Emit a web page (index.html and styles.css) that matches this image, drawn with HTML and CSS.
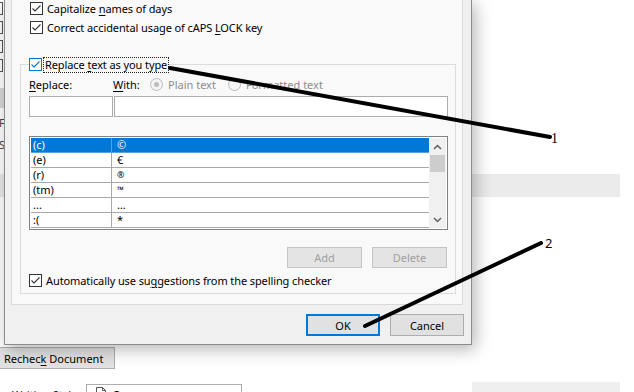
FILE: index.html
```html
<!DOCTYPE html>
<html lang="en">

<head>
    <meta charset="UTF-8">
    <title>AutoCorrect</title>
    <link rel="stylesheet" href="styles.css">
</head>

<body>
    <!-- the document window behind the dialog -->
    <div class="backdrop">
        <div class="back-top">
            <div class="side-strip">
                <span class="stub"></span>
                <span class="stub"></span>
                <span class="stub"></span>
                <span class="stub"></span>
                <span class="stub-band"></span>
                <span class="stub-text">F</span>
                <span class="stub-text">S</span>
            </div>
            <div class="back-main">
                <div class="band"></div>
            </div>
        </div>
        <div class="back-actions">
            <button class="win-btn recheck">Rechec<u>k</u> Document</button>
        </div>
        <div class="back-bottom">
            <span class="cut-label">Writing Style:</span>
            <div class="picker">
                <svg width="10" height="12" viewBox="0 0 10 12">
                    <path d="M0.5 0.5 H6.5 L9.5 3.5 V11.5 H0.5 Z M6.5 0.5 V3.5 H9.5" fill="#fff" stroke="#555" />
                </svg>
                <span>Grammar</span>
            </div>
            <div class="band band-low"></div>
        </div>
    </div>

    <div class="dialog">
        <div class="panel">
            <div class="check-row top-check">
                <span class="box"><svg viewBox="0 0 11 11"><polyline points="1.5,5.5 4,8 9.5,2.5" /></svg></span>
                <span>Capitalize <u>n</u>ames of days</span>
            </div>
            <div class="check-row top-check">
                <span class="box"><svg viewBox="0 0 11 11"><polyline points="1.5,5.5 4,8 9.5,2.5" /></svg></span>
                <span>Correct accidental usage of cAPS <u>L</u>OCK key</span>
            </div>

            <fieldset class="group">
                <legend class="check-row">
                    <span class="box box-focus"><svg viewBox="0 0 11 11"><polyline points="1.5,5.5 4,8 9.5,2.5" /></svg></span>
                    <span class="focus-text">Replace <u>t</u>ext as you type</span>
                </legend>

                <div class="field-labels">
                    <span class="lbl-replace"><u>R</u>eplace:</span>
                    <span class="lbl-with"><u>W</u>ith:</span>
                    <span class="radio on"></span>
                    <span class="disabled lbl-plain">Plain text</span>
                    <span class="radio"></span>
                    <span class="disabled">Formatted text</span>
                </div>

                <div class="inputs">
                    <div class="inp inp-replace"></div>
                    <div class="inp inp-with"></div>
                </div>

                <div class="list">
                    <div class="rows">
                        <div class="row sel"><span class="c1">(c)</span><span class="c2">©</span></div>
                        <div class="row"><span class="c1">(e)</span><span class="c2">€</span></div>
                        <div class="row"><span class="c1">(r)</span><span class="c2 small">®</span></div>
                        <div class="row"><span class="c1">(tm)</span><span class="c2 small">™</span></div>
                        <div class="row"><span class="c1">...</span><span class="c2">…</span></div>
                        <div class="row"><span class="c1">:(</span><span class="c2">*</span></div>
                    </div>
                    <div class="scrollbar">
                        <span class="arrow">
                            <svg width="9" height="6" viewBox="0 0 9 6"><polyline points="1,5 4.5,1.5 8,5" /></svg>
                        </span>
                        <span class="thumb"></span>
                        <span class="track"></span>
                        <span class="arrow">
                            <svg width="9" height="6" viewBox="0 0 9 6"><polyline points="1,1 4.5,4.5 8,1" /></svg>
                        </span>
                    </div>
                </div>

                <div class="list-actions">
                    <button class="win-btn" disabled>Add</button>
                    <button class="win-btn" disabled>Delete</button>
                </div>

                <div class="check-row auto-check">
                    <span class="box"><svg viewBox="0 0 11 11"><polyline points="1.5,5.5 4,8 9.5,2.5" /></svg></span>
                    <span>Automatically use su<u>g</u>gestions from the spelling checker</span>
                </div>
            </fieldset>
        </div>

        <div class="dialog-actions">
            <button class="win-btn default">OK</button>
            <button class="win-btn">Cancel</button>
        </div>
    </div>

    <!-- hand drawn callout lines -->
    <svg class="callouts" width="634" height="392" viewBox="0 0 634 392">
        <line x1="170" y1="68" x2="550" y2="137" />
        <line x1="365" y1="326" x2="541" y2="243" />
        <text class="num-1" x="551" y="143">1</text>
        <text class="num-2" x="545" y="248">2</text>
    </svg>
</body>

</html>
```

FILE: styles.css
```css
* {
    margin: 0;
    padding: 0;
    box-sizing: border-box;
}

body {
    width: 634px;
    height: 392px;
    overflow: hidden;
    position: relative;
    background: #fff;
    color: #000;
    font-family: "Noto Sans", "Open Sans", sans-serif;
    font-size: 11px;
}

u {
    text-decoration-thickness: 1px;
    text-underline-offset: 2px;
}

/* ---------- backdrop window ---------- */

.backdrop {
    display: flex;
    flex-direction: column;
}

.back-top {
    height: 343px;
    display: flex;
}

.side-strip {
    width: 4px;
    overflow: hidden;
    display: flex;
    flex-direction: column;
    flex-shrink: 0;
}

.stub {
    display: block;
    width: 13px;
    height: 13px;
    margin: 2px 0 4px -10px;
    border: 1px solid #555;
}

.stub-band {
    display: block;
    height: 20px;
    margin-top: 12px;
    background: #d9d9d9;
}

.stub-text {
    display: block;
    margin: 8px 0 0 -1px;
    line-height: 14px;
    color: #444;
}

.back-main {
    flex: 1;
}

.band {
    width: 620px;
    height: 23px;
    margin-top: 174px;
    margin-left: -4px;
    background: #ebebeb;
}

.back-actions {
    margin-top: 4px;
    height: 22px;
}

.win-btn {
    font-family: inherit;
    font-size: 11px;
    color: #000;
    height: 21px;
    background: #e1e1e1;
    border: 1px solid #adadad;
}

.win-btn:disabled {
    color: #a0a0a0;
    background: #e4e4e4;
    border-color: #c4c4c4;
}

.recheck {
    width: 117px;
    height: 22px;
    margin-left: -2px;
    text-align: left;
    padding-left: 5px;
}

.back-bottom {
    margin-top: 15px;
    display: flex;
    align-items: flex-start;
    position: relative;
}

.cut-label {
    width: 86px;
    padding-left: 12px;
    line-height: 14px;
    margin-top: 4px;
    color: #222;
}

.picker {
    width: 156px;
    height: 20px;
    border: 1px solid #adadad;
    display: flex;
    align-items: flex-start;
    gap: 6px;
    padding: 2px 0 0 9px;
}

.band-low {
    width: 148px;
    height: 10px;
    margin-left: 230px;
    margin-top: -2px;
    background: #efefef;
}

/* ---------- dialog ---------- */

.dialog {
    position: absolute;
    left: 4px;
    top: 0;
    width: 468px;
    background: #f0f0f0;
    border: 1px solid #8c8c8c;
    border-top: 0;
    box-shadow: 3px 4px 16px rgba(0, 0, 0, 0.3);
    z-index: 2;
}

.panel {
    margin: 0 8px 0 6px;
    padding: 2px 6px 10px 8px;
    background: #f9f9f9;
    border: 1px solid #dadada;
    border-top: 0;
}

.check-row {
    display: flex;
    align-items: center;
    gap: 4px;
    height: 13px;
    white-space: nowrap;
    letter-spacing: -0.1px;
}

.top-check {
    margin-left: 10px;
    margin-bottom: 6px;
}

.box {
    width: 13px;
    height: 13px;
    flex-shrink: 0;
    border: 1px solid #333;
    background: #fff;
    display: flex;
}

.box svg {
    width: 11px;
    height: 11px;
}

.box polyline {
    fill: none;
    stroke: #333;
    stroke-width: 1.1;
}

.box-focus {
    border-color: #0078d7;
}

.box-focus polyline {
    stroke: #0078d7;
}

.group {
    margin-top: 23px;
    border: 1px solid #dcdcdc;
    padding: 0 7px 6px 8px;
    min-width: 0;
}

.group legend {
    height: 15px;
    padding: 0;
    gap: 2px;
}

.focus-text {
    outline: 1px dotted #222;
    padding: 0 1px;
    line-height: 14px;
}

.field-labels {
    display: flex;
    align-items: center;
    height: 16px;
    margin-top: 4px;
    white-space: nowrap;
}

.lbl-replace {
    width: 84px;
}

.lbl-with {
    width: 37px;
}

.radio {
    width: 13px;
    height: 13px;
    border-radius: 50%;
    border: 1px solid #bcbcbc;
    background: #f4f4f4;
    margin-right: 5px;
    display: flex;
    align-items: center;
    justify-content: center;
}

.radio.on::after {
    content: "";
    width: 5px;
    height: 5px;
    border-radius: 50%;
    background: #bcbcbc;
}

.disabled {
    color: #8d8d8d;
}

.lbl-plain {
    width: 60px;
}

.inputs {
    display: flex;
    margin-top: 4px;
}

.inp {
    height: 21px;
    background: #fff;
    border: 1px solid #adadad;
}

.inp-replace {
    width: 84px;
}

.inp-with {
    flex: 1;
    margin-left: 1px;
}

.list {
    display: flex;
    height: 94px;
    margin-top: 19px;
    border: 1px solid #828282;
    padding: 1px;
    background: #fff;
}

.rows {
    flex: 1;
}

.row {
    display: flex;
    height: 15px;
    border-bottom: 1px solid #a9a9a9;
    line-height: 14px;
}

.c1 {
    width: 81px;
    padding-left: 2px;
    border-right: 1px solid #a9a9a9;
}

.c2 {
    padding-left: 5px;
}

.c2.small {
    font-size: 9px;
}

.row.sel {
    background: #0078d7;
    color: #fff;
    border-bottom-color: #5a9fd6;
}

.row.sel .c1 {
    border-right-color: #5a9fd6;
}

.scrollbar {
    width: 17px;
    display: flex;
    flex-direction: column;
    background: #f0f0f0;
}

.arrow {
    height: 17px;
    display: flex;
    align-items: center;
    justify-content: center;
}

.arrow polyline {
    fill: none;
    stroke: #606060;
    stroke-width: 1.5;
}

.thumb {
    height: 17px;
    margin: 0 1px;
    background: #cdcdcd;
}

.track {
    flex: 1;
}

.list-actions {
    display: flex;
    justify-content: flex-end;
    gap: 10px;
    margin-top: 17px;
    padding-right: 1px;
}

.list-actions .win-btn {
    width: 75px;
}

.auto-check {
    margin-top: 6px;
}

.dialog-actions {
    display: flex;
    justify-content: flex-end;
    gap: 10px;
    padding: 9px 7px 8px 0;
}

.dialog-actions .win-btn {
    width: 74px;
    height: 22px;
}

.win-btn.default {
    border: 2px solid #0078d7;
}

/* ---------- callouts ---------- */

.callouts {
    position: absolute;
    left: 0;
    top: 0;
    z-index: 5;
    pointer-events: none;
}

.callouts line {
    stroke: #000;
    stroke-width: 4;
    stroke-linecap: round;
}

.num-1 {
    font-family: "Liberation Serif", serif;
    font-size: 14px;
}

.num-2 {
    font-family: "Noto Sans", sans-serif;
    font-size: 13px;
}
```
